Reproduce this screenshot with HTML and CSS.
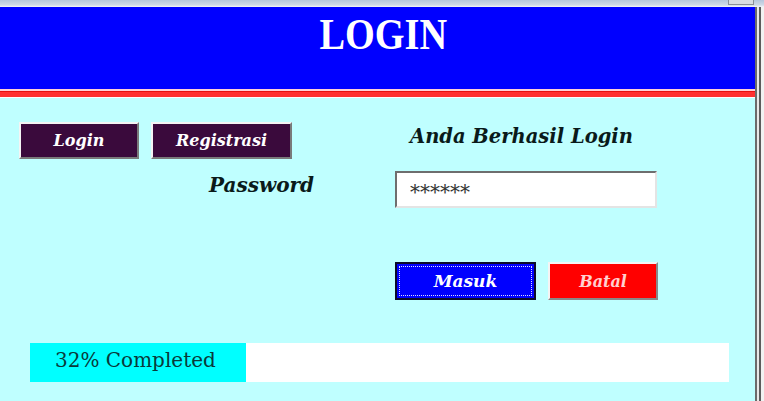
FILE: index.html
```html
<!DOCTYPE html>
<html lang="id">
<head>
  <meta charset="UTF-8" />
  <title>Login</title>
  <link rel="stylesheet" href="styles.css">
</head>
<body>
  <div class="titlebar"><span class="titlebar-btn"></span></div>
  <div class="frame">
    <div class="window">
      <div class="header">
        <h1>LOGIN</h1>
      </div>
      <div class="stripe"></div>
      <div class="content">
        <div class="left">
          <div class="tabs">
            <button class="tab tab-login">Login</button>
            <button class="tab tab-reg">Registrasi</button>
          </div>
          <div class="label">Password</div>
        </div>
        <div class="right">
          <div class="status">Anda Berhasil Login</div>
          <input class="pass" type="text" value="******" />
          <div class="actions">
            <button class="btn btn-masuk"><span>Masuk</span></button>
            <button class="btn btn-batal">Batal</button>
          </div>
        </div>
      </div>
      <div class="progress">
        <div class="progress-fill" style="width: 216px">32% Completed</div>
      </div>
    </div>
    <div class="edge"></div>
  </div>
</body>
</html>
```

FILE: styles.css
```css
* {
  box-sizing: border-box;
}
body {
  margin: 0;
  background: #bfffff;
  font-family: 'DejaVu Serif', serif;
  overflow: hidden;
}
.titlebar {
  height: 7px;
  background: linear-gradient(to bottom, #b5c6dc, #cfd9e6 70%, #f4f6f9);
  position: relative;
}
.titlebar-btn {
  position: absolute;
  right: 10px;
  top: 0;
  width: 26px;
  height: 5px;
  background: #d9dde2;
  border: 1px solid #8a8f96;
  border-top: none;
}
.frame {
  display: flex;
  height: 394px;
}
.window {
  flex: 1;
  background: #bfffff;
}
.edge {
  width: 9px;
  background: linear-gradient(to right, #6b6b6b 0, #6b6b6b 2px, #e8e8e8 2px, #e8e8e8 4px, #5c5c5c 4px, #5c5c5c 6px, #f2f2f2 6px);
}
.header {
  background: #0000ff;
  height: 82px;
  text-align: center;
  padding: 3px 0 0 12px;
}
h1 {
  display: inline-block;
  margin: 0;
  color: #fff;
  font-family: 'Liberation Serif', serif;
  font-size: 44px;
  font-weight: bold;
  line-height: 50px;
  transform: scaleX(0.87);
}
.stripe {
  height: 9px;
  background: #ff3030;
  border-top: 2px solid #ffd0d8;
  border-bottom: 1px solid #ffffff;
  box-shadow: inset 0 1px 0 #e81010;
}
.content {
  display: grid;
  grid-template-columns: 376px 1fr;
  padding: 24px 0 0 19px;
  height: 245px;
}
.tabs {
  display: flex;
  gap: 12px;
}
button {
  font-family: 'DejaVu Serif', serif;
  font-style: italic;
  font-weight: bold;
  cursor: pointer;
  padding: 0;
}
.tab {
  height: 37px;
  background: #3a0a3c;
  color: #fff;
  font-size: 16px;
  border: 2px solid;
  border-color: #f4f4f4 #7a7a7a #7a7a7a #f4f4f4;
}
.tab-login {
  width: 120px;
}
.tab-reg {
  width: 141px;
}
.label {
  padding: 14px 0 0 190px;
  font-size: 20px;
  font-weight: bold;
  font-style: italic;
  color: #0a1a1a;
}
.status {
  padding: 3px 0 0 15px;
  font-size: 19.5px;
  font-weight: bold;
  font-style: italic;
  color: #0a1a1a;
}
.pass {
  display: block;
  margin-top: 23px;
  width: 262px;
  height: 37px;
  background: #fff;
  border: 2px solid;
  border-color: #6e6e6e #e4e4e4 #e4e4e4 #6e6e6e;
  padding: 4px 0 0 13px;
  font-family: 'DejaVu Serif', serif;
  font-style: italic;
  font-size: 20px;
  color: #333;
  outline: none;
}
.actions {
  display: flex;
  gap: 12px;
  margin-top: 54px;
}
.btn {
  height: 38px;
  font-size: 17px;
}
.btn-masuk {
  width: 141px;
  background: #0000ff;
  color: #fff;
  border: 2px solid #0a0a2a;
  padding: 2px;
}
.btn-masuk span {
  display: flex;
  align-items: center;
  justify-content: center;
  height: 100%;
  border: 1px dotted #e0e0ff;
}
.btn-batal {
  width: 110px;
  background: #ff0000;
  color: #ffd0d0;
  font-size: 16px;
  border: 2px solid;
  border-color: #f4f4f4 #888 #888 #f4f4f4;
}
.progress {
  margin-left: 30px;
  width: 699px;
  height: 39px;
  background: #fff;
}
.progress-fill {
  height: 100%;
  background: #00ffff;
  color: #0a3a3a;
  font-size: 20px;
  line-height: 34px;
  padding-left: 25px;
  white-space: nowrap;
}
```
